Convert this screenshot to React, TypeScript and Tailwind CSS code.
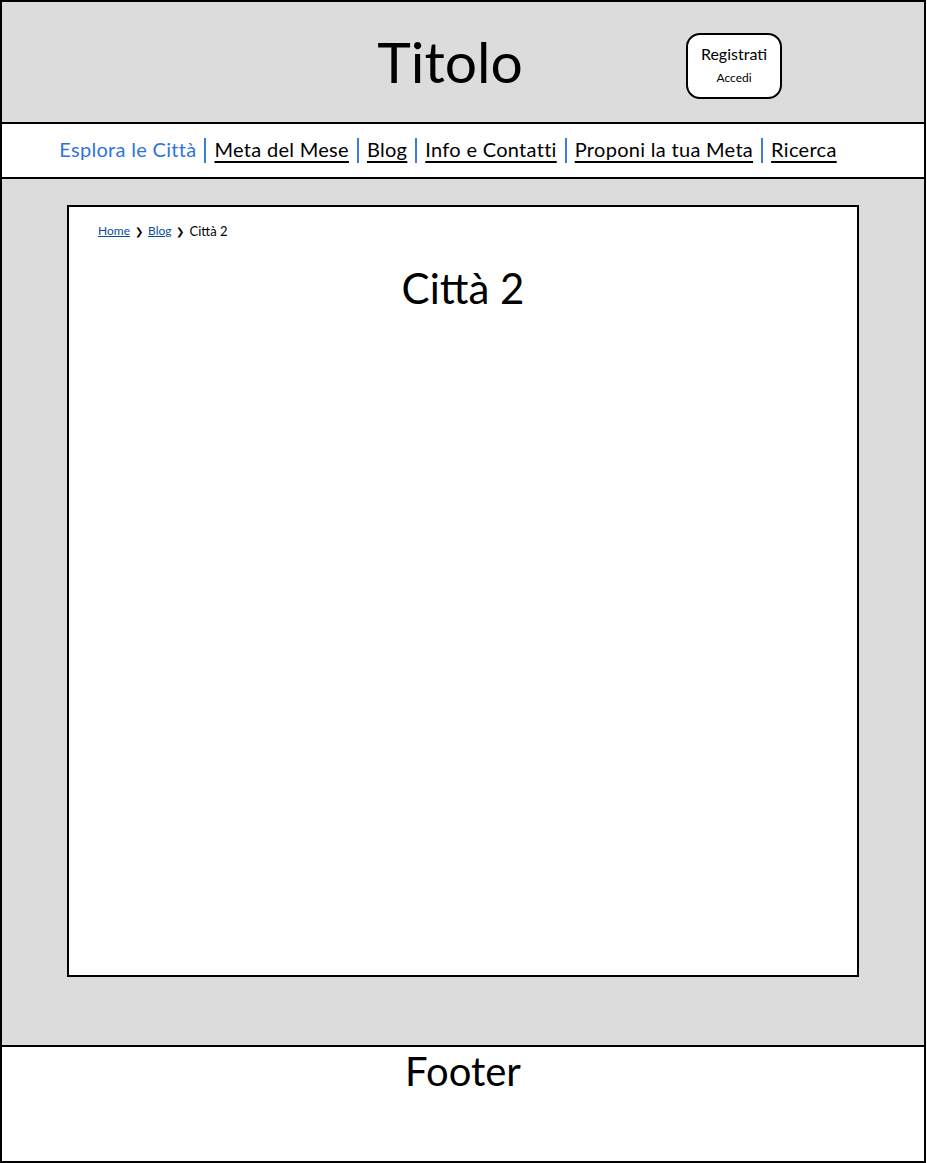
import React from 'react';

const navItems = [
  { label: 'Esplora le Città', active: true },
  { label: 'Meta del Mese' },
  { label: 'Blog' },
  { label: 'Info e Contatti' },
  { label: 'Proponi la tua Meta' },
  { label: 'Ricerca' },
];

function Header() {
  return (
    <header className="relative h-[124px] border-2 border-black bg-[#dcdcdc]">
      <h1 className="pr-[26px] pt-[21px] text-center text-[57px] leading-[76px] text-black">Titolo</h1>
      {/* login box */}
      <div className="absolute left-[684px] top-[31px] flex h-[66px] w-[96px] flex-col items-center rounded-[14px] border-2 border-black bg-white pt-[9px]">
        <span className="text-[16px] leading-[20px]">Registrati</span>
        <span className="mt-[7px] text-[12px] leading-[14px]">Accedi</span>
      </div>
    </header>
  );
}

function Nav() {
  return (
    <nav className="flex h-[55px] items-center justify-center border-2 border-t-0 border-black bg-white pb-[3px] pr-[30px]">
      {navItems.map((item, i) => (
        <React.Fragment key={item.label}>
          {i > 0 && <span className="mx-[8px] mt-[3px] h-[25px] w-[2px] bg-[#3b7ddd]" />}
          <a
            href="#"
            className={
              item.active
                ? 'text-[20px] leading-[24px] tracking-[0.3px] text-[#2f74dd]'
                : 'text-[20px] leading-[24px] tracking-[0.3px] text-black underline decoration-[1.5px] underline-offset-[4px]'
            }
          >
            {item.label}
          </a>
        </React.Fragment>
      ))}
    </nav>
  );
}

export default function App() {
  return (
    <div className="flex w-[926px] flex-col font-['Lato',sans-serif] text-black">
      <Header />
      <Nav />
      <main className="h-[868px] border-2 border-t-0 border-black bg-[#dcdcdc] pl-[65px] pt-[26px]">
        <div className="h-[772px] w-[792px] border-2 border-black bg-white px-[29px] pt-[16px]">
          <div className="flex items-center gap-[5px] text-[12px] leading-[16px]">
            <a href="#" className="text-[#0b4d9c] underline">Home</a>
            <span className="text-[10px]">❯</span>
            <a href="#" className="text-[#0b4d9c] underline">Blog</a>
            <span className="text-[10px]">❯</span>
            <span className="text-[13px]">Città 2</span>
          </div>
          <h2 className="mt-[24px] text-center text-[42px] leading-[50px]">Città 2</h2>
        </div>
      </main>
      <footer className="h-[116px] border-2 border-t-0 border-black bg-white">
        <h3 className="pt-[0px] text-center text-[40px] leading-[48px]">Footer</h3>
      </footer>
    </div>
  );
}
